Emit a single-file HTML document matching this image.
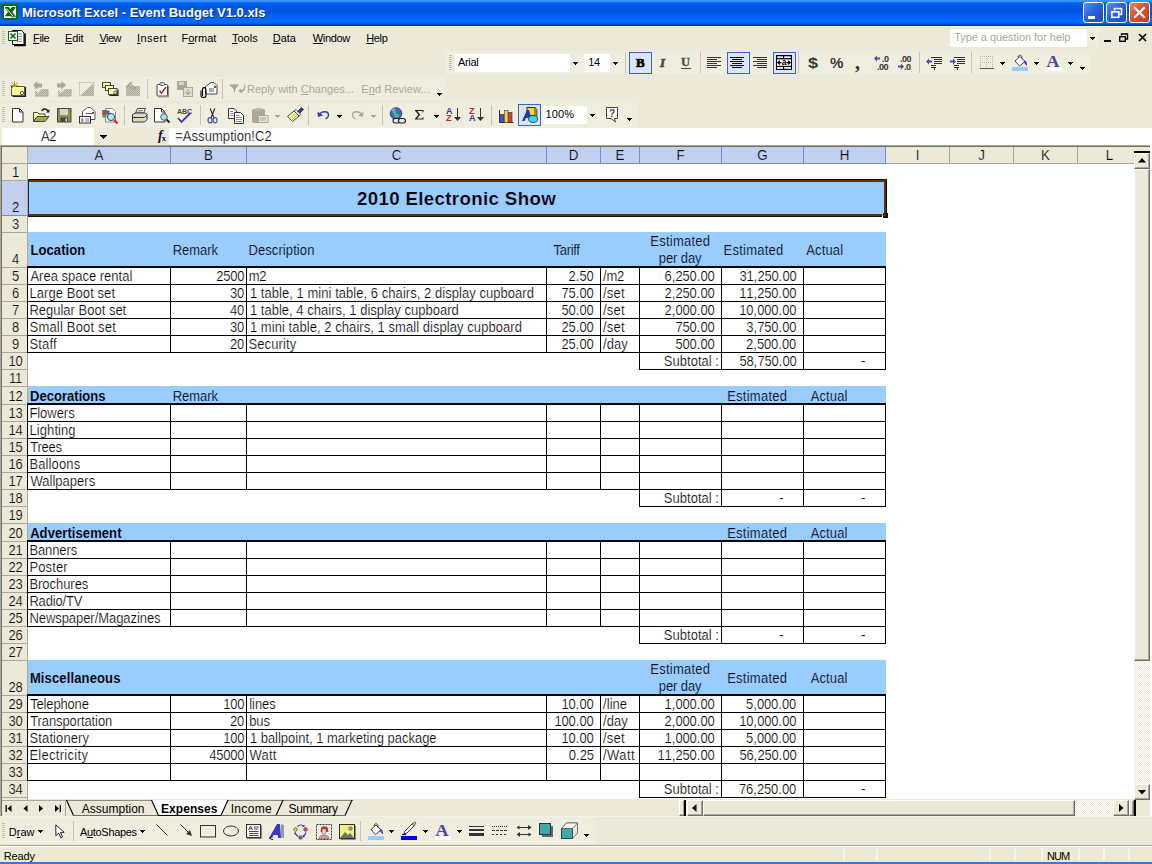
<!DOCTYPE html>
<html><head><meta charset="utf-8"><title>Microsoft Excel - Event Budget V1.0.xls</title>
<style>
html,body{margin:0;padding:0;}
body{width:1152px;height:864px;position:relative;overflow:hidden;background:#ECE9D8;font-family:"Liberation Sans",sans-serif;font-size:11px;color:#000;}
div,span{box-sizing:border-box;}
.a{position:absolute;}
.t{position:absolute;white-space:nowrap;line-height:1;}
.c{position:absolute;white-space:nowrap;font-size:13px;line-height:15px;height:15px;color:#000;-webkit-text-stroke:0.2px #fff;transform:scaleY(1.075);transform-origin:0 12px;}
.c i{display:inline-block;width:7px;text-align:center;font-style:normal;}
.c b{display:inline-block;width:4px;text-align:center;font-weight:normal;}
.rh{position:absolute;left:2.5px;width:26px;text-align:center;letter-spacing:-0.3px;font-size:13px;line-height:15px;height:15px;color:#000;-webkit-text-stroke:0.2px #ECE9D8;transform:scaleY(1.075);transform-origin:0 12px;}
.ch{position:absolute;top:148px;height:16px;text-align:center;font-size:13.33px;line-height:16px;color:#000;-webkit-text-stroke:0.2px #ECE9D8;transform:scaleY(1.075);transform-origin:0 12.5px;}
.hl{position:absolute;height:1px;background:#000;}
.vl{position:absolute;width:1px;background:#000;}
.m{position:absolute;top:32px;font-size:11px;line-height:13px;white-space:nowrap;}
.m u{text-decoration:underline;}
svg{position:absolute;overflow:visible;}
</style></head><body>

<div class="a" style="left:0;top:145px;width:1152px;height:654px;background:#fff;"></div>
<div class="a" style="left:0;top:145px;width:1135px;height:1px;background:#ACA899;"></div>
<div class="a" style="left:0;top:145px;width:1px;height:671px;background:#ACA899;"></div>
<div class="a" style="left:1px;top:146px;width:1133px;height:1px;background:#716F64;"></div>
<div class="a" style="left:1px;top:146px;width:1px;height:670px;background:#716F64;"></div>
<div class="a" style="left:2px;top:147px;width:1132px;height:17px;background:#ECE9D8;"></div>
<div class="a" style="left:28px;top:147px;width:858px;height:16px;background:#C1D0EE;"></div>
<div class="a" style="left:2px;top:163px;width:1132px;height:1px;background:#aca899;"></div>
<div class="a" style="left:28px;top:163px;width:858px;height:1px;background:#6f8fd0;"></div>
<div class="a" style="left:2px;top:164px;width:26px;height:636px;background:#ECE9D8;"></div>
<div class="a" style="left:27px;top:147px;width:1px;height:653px;background:#aca899;"></div>
<div class="a" style="left:2px;top:181px;width:25px;height:34px;background:#C1D0EE;"></div>
<div class="a" style="left:2px;top:215px;width:26px;height:1px;background:#6f8fd0;"></div>
<div class="a" style="left:170px;top:147px;width:1px;height:17px;background:#6f8fd0;"></div>
<div class="ch" style="left:28px;width:142px;-webkit-text-stroke-color:#C1D0EE;">A</div>
<div class="a" style="left:246px;top:147px;width:1px;height:17px;background:#6f8fd0;"></div>
<div class="ch" style="left:171px;width:75px;-webkit-text-stroke-color:#C1D0EE;">B</div>
<div class="a" style="left:546px;top:147px;width:1px;height:17px;background:#6f8fd0;"></div>
<div class="ch" style="left:247px;width:299px;-webkit-text-stroke-color:#C1D0EE;">C</div>
<div class="a" style="left:600px;top:147px;width:1px;height:17px;background:#6f8fd0;"></div>
<div class="ch" style="left:547px;width:53px;-webkit-text-stroke-color:#C1D0EE;">D</div>
<div class="a" style="left:639px;top:147px;width:1px;height:17px;background:#6f8fd0;"></div>
<div class="ch" style="left:601px;width:38px;-webkit-text-stroke-color:#C1D0EE;">E</div>
<div class="a" style="left:721px;top:147px;width:1px;height:17px;background:#6f8fd0;"></div>
<div class="ch" style="left:640px;width:81px;-webkit-text-stroke-color:#C1D0EE;">F</div>
<div class="a" style="left:803px;top:147px;width:1px;height:17px;background:#6f8fd0;"></div>
<div class="ch" style="left:722px;width:81px;-webkit-text-stroke-color:#C1D0EE;">G</div>
<div class="a" style="left:885px;top:147px;width:1px;height:17px;background:#6f8fd0;"></div>
<div class="ch" style="left:804px;width:81px;-webkit-text-stroke-color:#C1D0EE;">H</div>
<div class="a" style="left:949px;top:147px;width:1px;height:17px;background:#aca899;"></div>
<div class="ch" style="left:886px;width:63px;">I</div>
<div class="a" style="left:1013px;top:147px;width:1px;height:17px;background:#aca899;"></div>
<div class="ch" style="left:950px;width:63px;">J</div>
<div class="a" style="left:1077px;top:147px;width:1px;height:17px;background:#aca899;"></div>
<div class="ch" style="left:1014px;width:63px;">K</div>
<div class="ch" style="left:1078px;width:63px;">L</div>
<div class="a" style="left:2px;top:180px;width:25px;height:1px;background:#aca899;"></div>
<div class="rh" style="top:165px;">1</div>
<div class="rh" style="top:200px;-webkit-text-stroke-color:#C1D0EE;">2</div>
<div class="a" style="left:2px;top:232px;width:25px;height:1px;background:#aca899;"></div>
<div class="rh" style="top:217px;">3</div>
<div class="a" style="left:2px;top:267px;width:25px;height:1px;background:#aca899;"></div>
<div class="rh" style="top:252px;">4</div>
<div class="a" style="left:2px;top:284px;width:25px;height:1px;background:#aca899;"></div>
<div class="rh" style="top:269px;">5</div>
<div class="a" style="left:2px;top:301px;width:25px;height:1px;background:#aca899;"></div>
<div class="rh" style="top:286px;">6</div>
<div class="a" style="left:2px;top:318px;width:25px;height:1px;background:#aca899;"></div>
<div class="rh" style="top:303px;">7</div>
<div class="a" style="left:2px;top:335px;width:25px;height:1px;background:#aca899;"></div>
<div class="rh" style="top:320px;">8</div>
<div class="a" style="left:2px;top:352px;width:25px;height:1px;background:#aca899;"></div>
<div class="rh" style="top:337px;">9</div>
<div class="a" style="left:2px;top:369px;width:25px;height:1px;background:#aca899;"></div>
<div class="rh" style="top:354px;">10</div>
<div class="a" style="left:2px;top:386px;width:25px;height:1px;background:#aca899;"></div>
<div class="rh" style="top:371px;">11</div>
<div class="a" style="left:2px;top:404px;width:25px;height:1px;background:#aca899;"></div>
<div class="rh" style="top:389px;">12</div>
<div class="a" style="left:2px;top:421px;width:25px;height:1px;background:#aca899;"></div>
<div class="rh" style="top:406px;">13</div>
<div class="a" style="left:2px;top:438px;width:25px;height:1px;background:#aca899;"></div>
<div class="rh" style="top:423px;">14</div>
<div class="a" style="left:2px;top:455px;width:25px;height:1px;background:#aca899;"></div>
<div class="rh" style="top:440px;">15</div>
<div class="a" style="left:2px;top:472px;width:25px;height:1px;background:#aca899;"></div>
<div class="rh" style="top:457px;">16</div>
<div class="a" style="left:2px;top:489px;width:25px;height:1px;background:#aca899;"></div>
<div class="rh" style="top:474px;">17</div>
<div class="a" style="left:2px;top:506px;width:25px;height:1px;background:#aca899;"></div>
<div class="rh" style="top:491px;">18</div>
<div class="a" style="left:2px;top:523px;width:25px;height:1px;background:#aca899;"></div>
<div class="rh" style="top:508px;">19</div>
<div class="a" style="left:2px;top:541px;width:25px;height:1px;background:#aca899;"></div>
<div class="rh" style="top:526px;">20</div>
<div class="a" style="left:2px;top:558px;width:25px;height:1px;background:#aca899;"></div>
<div class="rh" style="top:543px;">21</div>
<div class="a" style="left:2px;top:575px;width:25px;height:1px;background:#aca899;"></div>
<div class="rh" style="top:560px;">22</div>
<div class="a" style="left:2px;top:592px;width:25px;height:1px;background:#aca899;"></div>
<div class="rh" style="top:577px;">23</div>
<div class="a" style="left:2px;top:609px;width:25px;height:1px;background:#aca899;"></div>
<div class="rh" style="top:594px;">24</div>
<div class="a" style="left:2px;top:626px;width:25px;height:1px;background:#aca899;"></div>
<div class="rh" style="top:611px;">25</div>
<div class="a" style="left:2px;top:643px;width:25px;height:1px;background:#aca899;"></div>
<div class="rh" style="top:628px;">26</div>
<div class="a" style="left:2px;top:660px;width:25px;height:1px;background:#aca899;"></div>
<div class="rh" style="top:645px;">27</div>
<div class="a" style="left:2px;top:695px;width:25px;height:1px;background:#aca899;"></div>
<div class="rh" style="top:680px;">28</div>
<div class="a" style="left:2px;top:712px;width:25px;height:1px;background:#aca899;"></div>
<div class="rh" style="top:697px;">29</div>
<div class="a" style="left:2px;top:729px;width:25px;height:1px;background:#aca899;"></div>
<div class="rh" style="top:714px;">30</div>
<div class="a" style="left:2px;top:746px;width:25px;height:1px;background:#aca899;"></div>
<div class="rh" style="top:731px;">31</div>
<div class="a" style="left:2px;top:763px;width:25px;height:1px;background:#aca899;"></div>
<div class="rh" style="top:748px;">32</div>
<div class="a" style="left:2px;top:780px;width:25px;height:1px;background:#aca899;"></div>
<div class="rh" style="top:765px;">33</div>
<div class="a" style="left:2px;top:797px;width:25px;height:1px;background:#aca899;"></div>
<div class="rh" style="top:782px;">34</div>
<div class="a" style="left:2px;top:814px;width:25px;height:1px;background:#aca899;"></div>
<div class="a" style="left:28px;top:180px;width:858px;height:36px;background:#99CCFF;"></div>
<div class="a" style="left:28px;top:232px;width:858px;height:36px;background:#99CCFF;"></div>
<div class="a" style="left:28px;top:386px;width:858px;height:19px;background:#99CCFF;"></div>
<div class="a" style="left:28px;top:523px;width:858px;height:19px;background:#99CCFF;"></div>
<div class="a" style="left:28px;top:660px;width:858px;height:36px;background:#99CCFF;"></div>
<div class="hl" style="left:27px;top:266px;width:859px;height:2px;background:#000;"></div>
<div class="hl" style="left:27px;top:284px;width:859px;height:1px;background:#000;"></div>
<div class="hl" style="left:27px;top:301px;width:859px;height:1px;background:#000;"></div>
<div class="hl" style="left:27px;top:318px;width:859px;height:1px;background:#000;"></div>
<div class="hl" style="left:27px;top:335px;width:859px;height:1px;background:#000;"></div>
<div class="hl" style="left:27px;top:352px;width:859px;height:1px;background:#000;"></div>
<div class="vl" style="left:27px;top:267px;height:86px;width:1px;background:#000;"></div>
<div class="vl" style="left:170px;top:267px;height:86px;width:1px;background:#000;"></div>
<div class="vl" style="left:246px;top:267px;height:86px;width:1px;background:#000;"></div>
<div class="vl" style="left:546px;top:267px;height:86px;width:1px;background:#000;"></div>
<div class="vl" style="left:600px;top:267px;height:86px;width:1px;background:#000;"></div>
<div class="vl" style="left:639px;top:267px;height:86px;width:1px;background:#000;"></div>
<div class="vl" style="left:721px;top:267px;height:86px;width:1px;background:#000;"></div>
<div class="vl" style="left:803px;top:267px;height:86px;width:1px;background:#000;"></div>
<div class="vl" style="left:885px;top:267px;height:86px;width:1px;background:#000;"></div>
<div class="hl" style="left:639px;top:369px;width:247px;height:1px;background:#000;"></div>
<div class="vl" style="left:639px;top:352px;height:18px;width:1px;background:#000;"></div>
<div class="vl" style="left:721px;top:352px;height:18px;width:1px;background:#000;"></div>
<div class="vl" style="left:803px;top:352px;height:18px;width:1px;background:#000;"></div>
<div class="vl" style="left:885px;top:352px;height:18px;width:1px;background:#000;"></div>
<div class="hl" style="left:27px;top:403px;width:859px;height:2px;background:#000;"></div>
<div class="hl" style="left:27px;top:421px;width:859px;height:1px;background:#000;"></div>
<div class="hl" style="left:27px;top:438px;width:859px;height:1px;background:#000;"></div>
<div class="hl" style="left:27px;top:455px;width:859px;height:1px;background:#000;"></div>
<div class="hl" style="left:27px;top:472px;width:859px;height:1px;background:#000;"></div>
<div class="hl" style="left:27px;top:489px;width:859px;height:1px;background:#000;"></div>
<div class="vl" style="left:27px;top:404px;height:86px;width:1px;background:#000;"></div>
<div class="vl" style="left:170px;top:404px;height:86px;width:1px;background:#000;"></div>
<div class="vl" style="left:246px;top:404px;height:86px;width:1px;background:#000;"></div>
<div class="vl" style="left:546px;top:404px;height:86px;width:1px;background:#000;"></div>
<div class="vl" style="left:600px;top:404px;height:86px;width:1px;background:#000;"></div>
<div class="vl" style="left:639px;top:404px;height:86px;width:1px;background:#000;"></div>
<div class="vl" style="left:721px;top:404px;height:86px;width:1px;background:#000;"></div>
<div class="vl" style="left:803px;top:404px;height:86px;width:1px;background:#000;"></div>
<div class="vl" style="left:885px;top:404px;height:86px;width:1px;background:#000;"></div>
<div class="hl" style="left:639px;top:506px;width:247px;height:1px;background:#000;"></div>
<div class="vl" style="left:639px;top:489px;height:18px;width:1px;background:#000;"></div>
<div class="vl" style="left:721px;top:489px;height:18px;width:1px;background:#000;"></div>
<div class="vl" style="left:803px;top:489px;height:18px;width:1px;background:#000;"></div>
<div class="vl" style="left:885px;top:489px;height:18px;width:1px;background:#000;"></div>
<div class="hl" style="left:27px;top:540px;width:859px;height:2px;background:#000;"></div>
<div class="hl" style="left:27px;top:558px;width:859px;height:1px;background:#000;"></div>
<div class="hl" style="left:27px;top:575px;width:859px;height:1px;background:#000;"></div>
<div class="hl" style="left:27px;top:592px;width:859px;height:1px;background:#000;"></div>
<div class="hl" style="left:27px;top:609px;width:859px;height:1px;background:#000;"></div>
<div class="hl" style="left:27px;top:626px;width:859px;height:1px;background:#000;"></div>
<div class="vl" style="left:27px;top:541px;height:86px;width:1px;background:#000;"></div>
<div class="vl" style="left:170px;top:541px;height:86px;width:1px;background:#000;"></div>
<div class="vl" style="left:246px;top:541px;height:86px;width:1px;background:#000;"></div>
<div class="vl" style="left:546px;top:541px;height:86px;width:1px;background:#000;"></div>
<div class="vl" style="left:600px;top:541px;height:86px;width:1px;background:#000;"></div>
<div class="vl" style="left:639px;top:541px;height:86px;width:1px;background:#000;"></div>
<div class="vl" style="left:721px;top:541px;height:86px;width:1px;background:#000;"></div>
<div class="vl" style="left:803px;top:541px;height:86px;width:1px;background:#000;"></div>
<div class="vl" style="left:885px;top:541px;height:86px;width:1px;background:#000;"></div>
<div class="hl" style="left:639px;top:643px;width:247px;height:1px;background:#000;"></div>
<div class="vl" style="left:639px;top:626px;height:18px;width:1px;background:#000;"></div>
<div class="vl" style="left:721px;top:626px;height:18px;width:1px;background:#000;"></div>
<div class="vl" style="left:803px;top:626px;height:18px;width:1px;background:#000;"></div>
<div class="vl" style="left:885px;top:626px;height:18px;width:1px;background:#000;"></div>
<div class="hl" style="left:27px;top:694px;width:859px;height:2px;background:#000;"></div>
<div class="hl" style="left:27px;top:712px;width:859px;height:1px;background:#000;"></div>
<div class="hl" style="left:27px;top:729px;width:859px;height:1px;background:#000;"></div>
<div class="hl" style="left:27px;top:746px;width:859px;height:1px;background:#000;"></div>
<div class="hl" style="left:27px;top:763px;width:859px;height:1px;background:#000;"></div>
<div class="hl" style="left:27px;top:780px;width:859px;height:1px;background:#000;"></div>
<div class="vl" style="left:27px;top:695px;height:86px;width:1px;background:#000;"></div>
<div class="vl" style="left:170px;top:695px;height:86px;width:1px;background:#000;"></div>
<div class="vl" style="left:246px;top:695px;height:86px;width:1px;background:#000;"></div>
<div class="vl" style="left:546px;top:695px;height:86px;width:1px;background:#000;"></div>
<div class="vl" style="left:600px;top:695px;height:86px;width:1px;background:#000;"></div>
<div class="vl" style="left:639px;top:695px;height:86px;width:1px;background:#000;"></div>
<div class="vl" style="left:721px;top:695px;height:86px;width:1px;background:#000;"></div>
<div class="vl" style="left:803px;top:695px;height:86px;width:1px;background:#000;"></div>
<div class="vl" style="left:885px;top:695px;height:86px;width:1px;background:#000;"></div>
<div class="hl" style="left:639px;top:797px;width:247px;height:1px;background:#000;"></div>
<div class="vl" style="left:639px;top:780px;height:18px;width:1px;background:#000;"></div>
<div class="vl" style="left:721px;top:780px;height:18px;width:1px;background:#000;"></div>
<div class="vl" style="left:803px;top:780px;height:18px;width:1px;background:#000;"></div>
<div class="vl" style="left:885px;top:780px;height:18px;width:1px;background:#000;"></div>
<div class="c" id="title" style="left:28px;width:857px;top:188px;text-align:center;font-weight:bold;font-size:18.67px;line-height:22px;height:22px;-webkit-text-stroke:0.2px #99CCFF;transform:none;letter-spacing:0.364px;margin-left:0px;">2010 Electronic Show</div>
<div class="c" id="A4" style="top:243px;left:30.4px;font-weight:bold;-webkit-text-stroke:0.1px #99CCFF;letter-spacing:0.1px;">Location</div>
<div class="c" id="B4" style="top:243px;left:172.7px;-webkit-text-stroke:0.2px #99CCFF;letter-spacing:-0.026px;">Remark</div>
<div class="c" id="C4" style="top:243px;left:248.47px;-webkit-text-stroke:0.2px #99CCFF;letter-spacing:0.09px;">Description</div>
<div class="c" id="D4" style="top:243px;left:553.54px;-webkit-text-stroke:0.2px #99CCFF;letter-spacing:-0.312px;">Tariff</div>
<div class="c" id="F4a" style="top:234px;left:639.81px;width:81px;text-align:center;-webkit-text-stroke:0.2px #99CCFF;letter-spacing:0.231px;">Estimated</div>
<div class="c" id="F4b" style="top:251px;left:639.69px;width:81px;text-align:center;-webkit-text-stroke:0.2px #99CCFF;letter-spacing:-0.1px;">per day</div>
<div class="c" id="G4" style="top:243px;left:723.47px;-webkit-text-stroke:0.2px #99CCFF;letter-spacing:0.249px;">Estimated</div>
<div class="c" id="H4" style="top:243px;left:806.21px;-webkit-text-stroke:0.2px #99CCFF;letter-spacing:0.152px;">Actual</div>
<div class="c" id="A5" style="top:269px;left:30.44px;letter-spacing:-0.004px;">Area space rental</div>
<div class="c" id="B5" style="top:269px;right:907.75px;text-align:right;"><i>2</i><i>5</i><i>0</i><i>0</i></div>
<div class="c" id="C5" style="top:269px;left:248.69px;letter-spacing:-0.2px;">m2</div>
<div class="c" id="D5" style="top:269px;right:558.51px;text-align:right;"><i>2</i><b>.</b><i>5</i><i>0</i></div>
<div class="c" id="E5" style="top:269px;left:603.08px;letter-spacing:-0.2px;">/m2</div>
<div class="c" id="F5" style="top:269px;right:437.56px;text-align:right;"><i>6</i><b>,</b><i>2</i><i>5</i><i>0</i><b>.</b><i>0</i><i>0</i></div>
<div class="c" id="G5" style="top:269px;right:355.63px;text-align:right;"><i>3</i><i>1</i><b>,</b><i>2</i><i>5</i><i>0</i><b>.</b><i>0</i><i>0</i></div>
<div class="c" id="A6" style="top:286px;left:29.4px;letter-spacing:0.083px;">Large Boot set</div>
<div class="c" id="B6" style="top:286px;right:907.92px;text-align:right;"><i>3</i><i>0</i></div>
<div class="c" id="C6" style="top:286px;left:249.89px;letter-spacing:0.045px;">1 table, 1 mini table, 6 chairs, 2 display cupboard</div>
<div class="c" id="D6" style="top:286px;right:558.48px;text-align:right;"><i>7</i><i>5</i><b>.</b><i>0</i><i>0</i></div>
<div class="c" id="E6" style="top:286px;left:603.08px;letter-spacing:0.18px;">/set</div>
<div class="c" id="F6" style="top:286px;right:437.56px;text-align:right;"><i>2</i><b>,</b><i>2</i><i>5</i><i>0</i><b>.</b><i>0</i><i>0</i></div>
<div class="c" id="G6" style="top:286px;right:355.82px;text-align:right;"><i>1</i><i>1</i><b>,</b><i>2</i><i>5</i><i>0</i><b>.</b><i>0</i><i>0</i></div>
<div class="c" id="A7" style="top:303px;left:29.39px;letter-spacing:0.001px;">Regular Boot set</div>
<div class="c" id="B7" style="top:303px;right:907.92px;text-align:right;"><i>4</i><i>0</i></div>
<div class="c" id="C7" style="top:303px;left:249.89px;letter-spacing:0.022px;">1 table, 4 chairs, 1 display cupboard</div>
<div class="c" id="D7" style="top:303px;right:558.5px;text-align:right;"><i>5</i><i>0</i><b>.</b><i>0</i><i>0</i></div>
<div class="c" id="E7" style="top:303px;left:603.08px;letter-spacing:0.18px;">/set</div>
<div class="c" id="F7" style="top:303px;right:437.4px;text-align:right;"><i>2</i><b>,</b><i>0</i><i>0</i><i>0</i><b>.</b><i>0</i><i>0</i></div>
<div class="c" id="G7" style="top:303px;right:355.86px;text-align:right;"><i>1</i><i>0</i><b>,</b><i>0</i><i>0</i><i>0</i><b>.</b><i>0</i><i>0</i></div>
<div class="c" id="A8" style="top:320px;left:29.58px;letter-spacing:0.184px;">Small Boot set</div>
<div class="c" id="B8" style="top:320px;right:907.92px;text-align:right;"><i>3</i><i>0</i></div>
<div class="c" id="C8" style="top:320px;left:249.89px;letter-spacing:0.053px;">1 mini table, 2 chairs, 1 small display cupboard</div>
<div class="c" id="D8" style="top:320px;right:558.48px;text-align:right;"><i>2</i><i>5</i><b>.</b><i>0</i><i>0</i></div>
<div class="c" id="E8" style="top:320px;left:603.08px;letter-spacing:0.18px;">/set</div>
<div class="c" id="F8" style="top:320px;right:437.64px;text-align:right;"><i>7</i><i>5</i><i>0</i><b>.</b><i>0</i><i>0</i></div>
<div class="c" id="G8" style="top:320px;right:355.65px;text-align:right;"><i>3</i><b>,</b><i>7</i><i>5</i><i>0</i><b>.</b><i>0</i><i>0</i></div>
<div class="c" id="A9" style="top:337px;left:29.56px;letter-spacing:0.11px;">Staff</div>
<div class="c" id="B9" style="top:337px;right:908.1px;text-align:right;"><i>2</i><i>0</i></div>
<div class="c" id="C9" style="top:337px;left:248.43px;letter-spacing:0.135px;">Security</div>
<div class="c" id="D9" style="top:337px;right:558.48px;text-align:right;"><i>2</i><i>5</i><b>.</b><i>0</i><i>0</i></div>
<div class="c" id="E9" style="top:337px;left:603.07px;letter-spacing:0.057px;">/day</div>
<div class="c" id="F9" style="top:337px;right:437.56px;text-align:right;"><i>5</i><i>0</i><i>0</i><b>.</b><i>0</i><i>0</i></div>
<div class="c" id="G9" style="top:337px;right:355.98px;text-align:right;"><i>2</i><b>,</b><i>5</i><i>0</i><i>0</i><b>.</b><i>0</i><i>0</i></div>
<div class="c" id="A29" style="top:697px;left:30.23px;letter-spacing:-0.168px;">Telephone</div>
<div class="c" id="B29" style="top:697px;right:907.85px;text-align:right;"><i>1</i><i>0</i><i>0</i></div>
<div class="c" id="C29" style="top:697px;left:249.33px;letter-spacing:-0.1px;">lines</div>
<div class="c" id="D29" style="top:697px;right:558.48px;text-align:right;"><i>1</i><i>0</i><b>.</b><i>0</i><i>0</i></div>
<div class="c" id="E29" style="top:697px;left:603.07px;letter-spacing:0.043px;">/line</div>
<div class="c" id="F29" style="top:697px;right:437.56px;text-align:right;"><i>1</i><b>,</b><i>0</i><i>0</i><i>0</i><b>.</b><i>0</i><i>0</i></div>
<div class="c" id="G29" style="top:697px;right:355.99px;text-align:right;"><i>5</i><b>,</b><i>0</i><i>0</i><i>0</i><b>.</b><i>0</i><i>0</i></div>
<div class="c" id="A30" style="top:714px;left:30.23px;letter-spacing:-0.1px;">Transportation</div>
<div class="c" id="B30" style="top:714px;right:908.1px;text-align:right;"><i>2</i><i>0</i></div>
<div class="c" id="C30" style="top:714px;left:249.34px;letter-spacing:-0.2px;">bus</div>
<div class="c" id="D30" style="top:714px;right:558.44px;text-align:right;"><i>1</i><i>0</i><i>0</i><b>.</b><i>0</i><i>0</i></div>
<div class="c" id="E30" style="top:714px;left:603.07px;letter-spacing:0.057px;">/day</div>
<div class="c" id="F30" style="top:714px;right:437.4px;text-align:right;"><i>2</i><b>,</b><i>0</i><i>0</i><i>0</i><b>.</b><i>0</i><i>0</i></div>
<div class="c" id="G30" style="top:714px;right:355.86px;text-align:right;"><i>1</i><i>0</i><b>,</b><i>0</i><i>0</i><i>0</i><b>.</b><i>0</i><i>0</i></div>
<div class="c" id="A31" style="top:731px;left:29.58px;letter-spacing:0.102px;">Stationery</div>
<div class="c" id="B31" style="top:731px;right:907.85px;text-align:right;"><i>1</i><i>0</i><i>0</i></div>
<div class="c" id="C31" style="top:731px;left:249.89px;letter-spacing:-0.015px;">1 ballpoint, 1 marketing package</div>
<div class="c" id="D31" style="top:731px;right:558.48px;text-align:right;"><i>1</i><i>0</i><b>.</b><i>0</i><i>0</i></div>
<div class="c" id="E31" style="top:731px;left:603.08px;letter-spacing:0.18px;">/set</div>
<div class="c" id="F31" style="top:731px;right:437.56px;text-align:right;"><i>1</i><b>,</b><i>0</i><i>0</i><i>0</i><b>.</b><i>0</i><i>0</i></div>
<div class="c" id="G31" style="top:731px;right:355.99px;text-align:right;"><i>5</i><b>,</b><i>0</i><i>0</i><i>0</i><b>.</b><i>0</i><i>0</i></div>
<div class="c" id="A32" style="top:748px;left:29.39px;letter-spacing:0.292px;">Electricity</div>
<div class="c" id="B32" style="top:748px;right:907.87px;text-align:right;"><i>4</i><i>5</i><i>0</i><i>0</i><i>0</i></div>
<div class="c" id="C32" style="top:748px;left:249.47px;letter-spacing:0.206px;">Watt</div>
<div class="c" id="D32" style="top:748px;right:558.37px;text-align:right;"><i>0</i><b>.</b><i>2</i><i>5</i></div>
<div class="c" id="E32" style="top:748px;left:603.07px;letter-spacing:0.409px;">/Watt</div>
<div class="c" id="F32" style="top:748px;right:437.56px;text-align:right;"><i>1</i><i>1</i><b>,</b><i>2</i><i>5</i><i>0</i><b>.</b><i>0</i><i>0</i></div>
<div class="c" id="G32" style="top:748px;right:355.61px;text-align:right;"><i>5</i><i>6</i><b>,</b><i>2</i><i>5</i><i>0</i><b>.</b><i>0</i><i>0</i></div>
<div class="c" id="F10" style="top:354px;right:433px;text-align:right;letter-spacing:0.03px;">Subtotal :</div>
<div class="c" id="G10" style="top:354px;right:355.61px;text-align:right;"><i>5</i><i>8</i><b>,</b><i>7</i><i>5</i><i>0</i><b>.</b><i>0</i><i>0</i></div>
<div class="c" id="H10" style="top:354px;right:286.87px;text-align:right;letter-spacing:-0.2px;">-</div>
<div class="c" id="A12" style="top:389px;left:30px;font-weight:bold;-webkit-text-stroke:0.1px #99CCFF;letter-spacing:0.044px;">Decorations</div>
<div class="c" id="B12" style="top:389px;left:172.7px;-webkit-text-stroke:0.2px #99CCFF;letter-spacing:-0.026px;">Remark</div>
<div class="c" id="G12" style="top:389px;left:727.19px;-webkit-text-stroke:0.2px #99CCFF;letter-spacing:0.249px;">Estimated</div>
<div class="c" id="H12" style="top:389px;left:810.69px;-webkit-text-stroke:0.2px #99CCFF;letter-spacing:0.11px;">Actual</div>
<div class="c" id="A13" style="top:406px;left:29.39px;letter-spacing:-0.042px;">Flowers</div>
<div class="c" id="A14" style="top:423px;left:29.58px;letter-spacing:0.06px;">Lighting</div>
<div class="c" id="A15" style="top:440px;left:30.23px;letter-spacing:-0.257px;">Trees</div>
<div class="c" id="A16" style="top:457px;left:29.39px;letter-spacing:0.137px;">Balloons</div>
<div class="c" id="A17" style="top:474px;left:30.45px;letter-spacing:0.019px;">Wallpapers</div>
<div class="c" id="F18" style="top:491px;right:433px;text-align:right;letter-spacing:0.03px;">Subtotal :</div>
<div class="c" id="G18" style="top:491px;right:368.64px;text-align:right;letter-spacing:-0.2px;">-</div>
<div class="c" id="H18" style="top:491px;right:286.87px;text-align:right;letter-spacing:-0.2px;">-</div>
<div class="c" id="A20" style="top:526px;left:30.13px;font-weight:bold;-webkit-text-stroke:0.1px #99CCFF;letter-spacing:0.086px;">Advertisement</div>
<div class="c" id="G20" style="top:526px;left:727.19px;-webkit-text-stroke:0.2px #99CCFF;letter-spacing:0.249px;">Estimated</div>
<div class="c" id="H20" style="top:526px;left:810.69px;-webkit-text-stroke:0.2px #99CCFF;letter-spacing:0.11px;">Actual</div>
<div class="c" id="A21" style="top:543px;left:29.39px;letter-spacing:-0.1px;">Banners</div>
<div class="c" id="A22" style="top:560px;left:29.39px;letter-spacing:0.138px;">Poster</div>
<div class="c" id="A23" style="top:577px;left:29.39px;letter-spacing:-0.033px;">Brochures</div>
<div class="c" id="A24" style="top:594px;left:29.39px;letter-spacing:-0.151px;">Radio/TV</div>
<div class="c" id="A25" style="top:611px;left:29.38px;letter-spacing:-0.055px;">Newspaper/Magazines</div>
<div class="c" id="F26" style="top:628px;right:433px;text-align:right;letter-spacing:0.03px;">Subtotal :</div>
<div class="c" id="G26" style="top:628px;right:368.64px;text-align:right;letter-spacing:-0.2px;">-</div>
<div class="c" id="H26" style="top:628px;right:286.87px;text-align:right;letter-spacing:-0.2px;">-</div>
<div class="c" id="A28" style="top:671px;left:29.91px;font-weight:bold;-webkit-text-stroke:0.1px #99CCFF;letter-spacing:0.134px;">Miscellaneous</div>
<div class="c" id="F28a" style="top:662px;left:639.81px;width:81px;text-align:center;-webkit-text-stroke:0.2px #99CCFF;letter-spacing:0.231px;">Estimated</div>
<div class="c" id="F28b" style="top:679px;left:639.69px;width:81px;text-align:center;-webkit-text-stroke:0.2px #99CCFF;letter-spacing:-0.1px;">per day</div>
<div class="c" id="G28" style="top:671px;left:727.19px;-webkit-text-stroke:0.2px #99CCFF;letter-spacing:0.249px;">Estimated</div>
<div class="c" id="H28" style="top:671px;left:810.69px;-webkit-text-stroke:0.2px #99CCFF;letter-spacing:0.11px;">Actual</div>
<div class="c" id="F34" style="top:782px;right:433px;text-align:right;letter-spacing:0.03px;">Subtotal :</div>
<div class="c" id="G34" style="top:782px;right:355.99px;text-align:right;"><i>7</i><i>6</i><b>,</b><i>2</i><i>5</i><i>0</i><b>.</b><i>0</i><i>0</i></div>
<div class="c" id="H34" style="top:782px;right:286.87px;text-align:right;letter-spacing:-0.2px;">-</div>
<div class="a" style="left:28px;top:179px;width:859px;height:3px;background:#5E3208;"></div>
<div class="a" style="left:28px;top:179px;width:859px;height:1px;background:#160B00;"></div>
<div class="a" style="left:28px;top:214px;width:854px;height:3px;background:#5E3208;"></div>
<div class="a" style="left:28px;top:216px;width:854px;height:1px;background:#160B00;"></div>
<div class="a" style="left:28px;top:179px;width:1px;height:38px;background:#232C5A;"></div>
<div class="a" style="left:884px;top:179px;width:3px;height:34px;background:#5E3208;"></div>
<div class="a" style="left:886px;top:179px;width:1px;height:34px;background:#160B00;"></div>
<div class="a" style="left:883px;top:213px;width:5px;height:5px;background:#1A0E02;"></div>
<div class="a" style="left:884px;top:214px;width:2px;height:2px;background:#5E3208;"></div>
<div class="a" style="left:0;top:0;width:1152px;height:26px;background:linear-gradient(to bottom,#3B97FF 0px,#3B97FF 1px,#3590FC 1px,#3590FC 2px,#0A6CF6 2px,#0A6CF6 3px,#0265F1 3px,#0265F1 4px,#005FE8 4px,#005FE8 5px,#005AE0 5px,#005AE0 6px,#0058DE 6px,#0058DE 7px,#0057DE 7px,#0057DE 8px,#0056DF 8px,#0056DF 9px,#0055E1 9px,#0055E1 10px,#0055E4 10px,#0055E4 11px,#0055E7 11px,#0055E7 12px,#0056EA 12px,#0056EA 13px,#0058EE 13px,#0058EE 14px,#005BF2 14px,#005BF2 15px,#005EF6 15px,#005EF6 16px,#0161F9 16px,#0161F9 17px,#0264FC 17px,#0264FC 18px,#0367FE 18px,#0367FE 19px,#0469FF 19px,#0469FF 20px,#046AFF 20px,#046AFF 21px,#0469FE 21px,#0469FE 22px,#0566F8 22px,#0566F8 23px,#055DE8 23px,#055DE8 24px,#0349C8 24px,#0349C8 25px,#0136A8 25px,#0136A8 26px);"></div>
<svg style="left:2px;top:4px;" width="16" height="16" viewBox="0 0 16 16" ><rect x="0" y="0" width="16" height="16" fill="#0B6A10"/><rect x="2" y="2" width="12" height="12" fill="#fff"/><path d="M3 3h4l1.500 2 1.500-2h3.500v1l-3 4 3 4v0.500h-10.500v-0.500l3-4-3-4z" fill="#0B6A10"/><path d="M4.500 4.500l6.500 7.500" stroke="#fff" stroke-width="0.900"/><rect x="2" y="12.500" width="12" height="1.500" fill="#fff"/><rect x="9" y="12.300" width="5" height="0.900" fill="#0B6A10"/></svg>
<div class="t" style="left:22px;top:6px;font-size:13px;font-weight:bold;color:#fff;text-shadow:1px 1px 0 #0A2E9A;" id="ttl">Microsoft Excel - Event Budget V1.0.xls</div>
<div class="a" style="left:1083px;top:2px;width:21px;height:21px;border:1px solid #fff;border-radius:3px;background:linear-gradient(135deg,#5C8FF2 0%,#2F62DA 45%,#1C48C0 100%);"></div>
<div class="a" style="left:1106px;top:2px;width:21px;height:21px;border:1px solid #fff;border-radius:3px;background:linear-gradient(135deg,#5C8FF2 0%,#2F62DA 45%,#1C48C0 100%);"></div>
<div class="a" style="left:1129px;top:2px;width:21px;height:21px;border:1px solid #fff;border-radius:3px;background:linear-gradient(135deg,#E9866A 0%,#D8512C 45%,#C23A12 100%);"></div>
<div class="a" style="left:1088px;top:16px;width:7px;height:3px;background:#fff;"></div>
<svg style="left:1106px;top:2px;" width="21" height="21" viewBox="0 0 21 21" ><path d="M8.5 8.5v-2h7v6h-2" fill="none" stroke="#fff" stroke-width="1.6"/><rect x="5.8" y="9.8" width="7" height="5.5" fill="none" stroke="#fff" stroke-width="1.6"/></svg>
<svg style="left:1129px;top:2px;" width="21" height="21" viewBox="0 0 21 21" ><path d="M6 6l9 9M15 6l-9 9" stroke="#fff" stroke-width="2.2" stroke-linecap="square"/></svg>
<div class="a" style="left:0px;top:26px;width:1152px;height:102px;background:#ECE9D8;"></div>
<div class="a" style="left:0px;top:26px;width:1152px;height:1px;background:#F1F4FA;"></div>
<div class="a" style="left:2px;top:31px;width:3px;height:1px;background:#C1BEB0;"></div>
<div class="a" style="left:2px;top:33px;width:3px;height:1px;background:#C1BEB0;"></div>
<div class="a" style="left:2px;top:35px;width:3px;height:1px;background:#C1BEB0;"></div>
<div class="a" style="left:2px;top:37px;width:3px;height:1px;background:#C1BEB0;"></div>
<div class="a" style="left:2px;top:39px;width:3px;height:1px;background:#C1BEB0;"></div>
<div class="a" style="left:2px;top:41px;width:3px;height:1px;background:#C1BEB0;"></div>
<div class="a" style="left:2px;top:43px;width:3px;height:1px;background:#C1BEB0;"></div>
<svg style="left:8px;top:29px;" width="17" height="17" viewBox="0 0 17 17" ><path d="M4.5 1.5h9l2.5 2.5v11.500h-11.500z" fill="#fff" stroke="#000" stroke-width="1"/><path d="M6 16.5h11v-12" fill="none" stroke="#000" stroke-width="1.6"/><path d="M9 5h5M9 7.500h5M9 10h5M9 12.500h5" stroke="#9c9c9c" stroke-width="1"/><rect x="0.500" y="2.500" width="9" height="9" fill="#fff" stroke="#0B6A10" stroke-width="1"/><path d="M2.500 4.500l5 5M7.500 4.500l-5 5" stroke="#0B6A10" stroke-width="1.700"/></svg>
<div class="m" id="m0" style="letter-spacing:-0.347px;margin-left:0px;left:33px;"><u>F</u>ile</div>
<div class="m" id="m1" style="letter-spacing:-0.142px;margin-left:-1.04px;left:66px;"><u>E</u>dit</div>
<div class="m" id="m2" style="letter-spacing:-0.607px;margin-left:0.56px;left:99px;"><u>V</u>iew</div>
<div class="m" id="m3" style="letter-spacing:0.405px;margin-left:0.01px;left:137px;"><u>I</u>nsert</div>
<div class="m" id="m4" style="letter-spacing:0px;margin-left:-0.5px;left:182px;">F<u>o</u>rmat</div>
<div class="m" id="m5" style="letter-spacing:-0.012px;margin-left:0px;left:232px;"><u>T</u>ools</div>
<div class="m" id="m6" style="letter-spacing:-0.096px;margin-left:-0.21px;left:273px;"><u>D</u>ata</div>
<div class="m" id="m7" style="letter-spacing:-0.343px;margin-left:0.79px;left:312px;"><u>W</u>indow</div>
<div class="m" id="m8" style="letter-spacing:-0.369px;margin-left:0.25px;left:366px;"><u>H</u>elp</div>
<div class="a" style="left:950px;top:29px;width:137px;height:18px;background:#fff;"></div>
<div class="t" id="hlp" style="letter-spacing:-0.046px;margin-left:0.14px;left:954px;top:32px;font-size:11px;color:#ACA899;">Type a question for help</div>
<div class="a" style="left:1087px;top:29px;width:12px;height:18px;background:#EFEDDE;"></div>
<div class="a" style="left:1090px;top:37px;width:5px;height:1px;background:#000;"></div>
<div class="a" style="left:1091px;top:38px;width:3px;height:1px;background:#000;"></div>
<div class="a" style="left:1092px;top:39px;width:1px;height:1px;background:#000;"></div>
<div class="a" style="left:1104px;top:40px;width:7px;height:2px;background:#000;"></div>
<svg style="left:1119px;top:33px;" width="10" height="10" viewBox="0 0 10 10" ><path d="M2.500 2.500v-1.500h6v5h-1.500" fill="none" stroke="#000" stroke-width="1.400"/><rect x="0.700" y="3.700" width="5.600" height="4.600" fill="none" stroke="#000" stroke-width="1.400"/></svg>
<svg style="left:1138px;top:33px;" width="9" height="9" viewBox="0 0 9 9" ><path d="M1 1l7 7M8 1l-7 7" stroke="#000" stroke-width="1.700"/></svg>
<div class="a" style="left:446px;top:51px;width:643px;height:23px;background:#EFEDDE;border-radius:2px;"></div>
<div class="a" style="left:449px;top:55px;width:3px;height:1px;background:#C1BEB0;"></div>
<div class="a" style="left:449px;top:57px;width:3px;height:1px;background:#C1BEB0;"></div>
<div class="a" style="left:449px;top:59px;width:3px;height:1px;background:#C1BEB0;"></div>
<div class="a" style="left:449px;top:61px;width:3px;height:1px;background:#C1BEB0;"></div>
<div class="a" style="left:449px;top:63px;width:3px;height:1px;background:#C1BEB0;"></div>
<div class="a" style="left:449px;top:65px;width:3px;height:1px;background:#C1BEB0;"></div>
<div class="a" style="left:449px;top:67px;width:3px;height:1px;background:#C1BEB0;"></div>
<div class="a" style="left:449px;top:69px;width:3px;height:1px;background:#C1BEB0;"></div>
<div class="a" style="left:455px;top:54px;width:115px;height:18px;background:#fff;"></div>
<div class="a" style="left:570px;top:54px;width:12px;height:18px;background:#EFEDDE;"></div>
<div class="t" id="fnt" style="letter-spacing:-0.333px;margin-left:-0.05px;left:458px;top:57px;font-size:11px;">Arial</div>
<div class="a" style="left:573px;top:62px;width:5px;height:1px;background:#000;"></div>
<div class="a" style="left:574px;top:63px;width:3px;height:1px;background:#000;"></div>
<div class="a" style="left:575px;top:64px;width:1px;height:1px;background:#000;"></div>
<div class="a" style="left:584px;top:54px;width:26px;height:18px;background:#fff;"></div>
<div class="a" style="left:610px;top:54px;width:12px;height:18px;background:#EFEDDE;"></div>
<div class="t" id="fsz" style="letter-spacing:-0.2px;margin-left:0.19px;left:588px;top:57px;font-size:11px;">14</div>
<div class="a" style="left:613px;top:62px;width:5px;height:1px;background:#000;"></div>
<div class="a" style="left:614px;top:63px;width:3px;height:1px;background:#000;"></div>
<div class="a" style="left:615px;top:64px;width:1px;height:1px;background:#000;"></div>
<div class="a" style="left:625px;top:52px;width:1px;height:21px;background:#C5C2B8;"></div>
<div class="a" style="left:629px;top:52px;width:23px;height:22px;background:#DCE5F5;border:1px solid #3A66B8;"></div>
<div class="t" style="left:636px;top:56px;font-family:'Liberation Serif',serif;font-weight:bold;font-size:13px;-webkit-text-stroke:0.7px #000;">B</div>
<div class="t" style="left:660px;top:56px;font-family:'Liberation Serif',serif;font-weight:bold;font-style:italic;font-size:13px;color:#4a4a4a;-webkit-text-stroke:0.6px #4a4a4a;">I</div>
<div class="t" style="left:681px;top:56px;font-family:'Liberation Serif',serif;font-weight:bold;font-size:12.5px;color:#4a4a4a;-webkit-text-stroke:0.3px #4a4a4a;">U</div>
<div class="a" style="left:681px;top:68px;width:10px;height:1px;background:#4a4a4a;"></div>
<div class="a" style="left:700px;top:52px;width:1px;height:21px;background:#C5C2B8;"></div>
<div class="a" style="left:707px;top:57px;width:14px;height:1px;background:#333;"></div>
<div class="a" style="left:707px;top:59px;width:10px;height:1px;background:#333;"></div>
<div class="a" style="left:707px;top:61px;width:14px;height:1px;background:#333;"></div>
<div class="a" style="left:707px;top:63px;width:10px;height:1px;background:#333;"></div>
<div class="a" style="left:707px;top:65px;width:14px;height:1px;background:#333;"></div>
<div class="a" style="left:707px;top:67px;width:10px;height:1px;background:#333;"></div>
<div class="a" style="left:727px;top:52px;width:23px;height:22px;background:#DCE5F5;border:1px solid #3A66B8;"></div>
<div class="a" style="left:730px;top:57px;width:14px;height:1px;background:#000;"></div>
<div class="a" style="left:732px;top:59px;width:10px;height:1px;background:#000;"></div>
<div class="a" style="left:730px;top:61px;width:14px;height:1px;background:#000;"></div>
<div class="a" style="left:732px;top:63px;width:10px;height:1px;background:#000;"></div>
<div class="a" style="left:730px;top:65px;width:14px;height:1px;background:#000;"></div>
<div class="a" style="left:732px;top:67px;width:10px;height:1px;background:#000;"></div>
<div class="a" style="left:753px;top:57px;width:14px;height:1px;background:#333;"></div>
<div class="a" style="left:757px;top:59px;width:10px;height:1px;background:#333;"></div>
<div class="a" style="left:753px;top:61px;width:14px;height:1px;background:#333;"></div>
<div class="a" style="left:757px;top:63px;width:10px;height:1px;background:#333;"></div>
<div class="a" style="left:753px;top:65px;width:14px;height:1px;background:#333;"></div>
<div class="a" style="left:757px;top:67px;width:10px;height:1px;background:#333;"></div>
<div class="a" style="left:773px;top:52px;width:23px;height:22px;background:#DCE5F5;border:1px solid #3A66B8;"></div>
<svg style="left:776px;top:55px;" width="16" height="15" viewBox="0 0 16 15" ><rect x="0" y="0" width="16" height="15" fill="#000"/><rect x="1.200" y="1.300" width="5.800" height="1.800" fill="#fff"/><rect x="8.200" y="1.300" width="6.600" height="1.800" fill="#fff"/><rect x="1" y="4.400" width="14" height="6.400" fill="#fff"/><rect x="1.200" y="12" width="5.800" height="1.800" fill="#fff"/><rect x="8.200" y="12" width="6.600" height="1.800" fill="#fff"/><path d="M0.800 7.600l3-2.600v1.900h1.700v1.400h-1.700v1.900zM15.200 7.600l-3-2.600v1.900h-1.700v1.400h1.700v1.900z" fill="#000"/><text x="8" y="10.300" font-size="8.500" font-weight="bold" text-anchor="middle" font-family="Liberation Sans" fill="#000">a</text></svg>
<div class="a" style="left:798px;top:52px;width:1px;height:21px;background:#C5C2B8;"></div>
<div class="t" style="left:808px;top:55px;font-weight:bold;font-size:15px;color:#3a3a3a;transform:scaleX(1.2);transform-origin:0 0;">$</div>
<div class="t" style="left:830px;top:56px;font-weight:bold;font-size:14px;color:#3a3a3a;transform:scaleX(1.08);transform-origin:0 0;">%</div>
<div class="t" style="left:855px;top:52px;font-family:'Liberation Serif',serif;font-weight:bold;font-size:20px;color:#333;">,</div>
<div class="t" style="left:882px;top:55px;font-size:9px;font-weight:bold;color:#333;letter-spacing:-0.5px;">.0</div>
<div class="t" style="left:877px;top:63px;font-size:9px;font-weight:bold;color:#333;letter-spacing:-0.5px;">.00</div>
<svg style="left:874px;top:55px;" width="7" height="7" viewBox="0 0 7 7" ><path d="M0 3.500l3-3v2h3v2h-3v2z" fill="#4A4A9C"/></svg>
<div class="t" style="left:900px;top:55px;font-size:9px;font-weight:bold;color:#333;letter-spacing:-0.5px;">.00</div>
<div class="t" style="left:904px;top:63px;font-size:9px;font-weight:bold;color:#333;letter-spacing:-0.5px;">.0</div>
<svg style="left:897px;top:63px;" width="7" height="7" viewBox="0 0 7 7" ><path d="M7 3.500l-3-3v2h-3v2h3v2z" fill="#4A4A9C"/></svg>
<div class="a" style="left:919px;top:52px;width:1px;height:21px;background:#C5C2B8;"></div>
<div class="a" style="left:931px;top:57px;width:11px;height:1px;background:#333;"></div>
<div class="a" style="left:934px;top:59px;width:8px;height:1px;background:#333;"></div>
<div class="a" style="left:934px;top:61px;width:8px;height:1px;background:#333;"></div>
<div class="a" style="left:934px;top:63px;width:8px;height:1px;background:#333;"></div>
<div class="a" style="left:931px;top:65px;width:5px;height:1px;background:#333;"></div>
<div class="a" style="left:931px;top:67px;width:5px;height:1px;background:#333;"></div>
<div class="a" style="left:934px;top:67px;width:1px;height:3px;background:#333;"></div>
<svg style="left:926px;top:58px;" width="7" height="7" viewBox="0 0 7 7" ><path d="M0 3.500l3-3v2h3v2h-3v2z" fill="#4A4A9C"/></svg>
<div class="a" style="left:954px;top:57px;width:11px;height:1px;background:#333;"></div>
<div class="a" style="left:957px;top:59px;width:8px;height:1px;background:#333;"></div>
<div class="a" style="left:957px;top:61px;width:8px;height:1px;background:#333;"></div>
<div class="a" style="left:957px;top:63px;width:8px;height:1px;background:#333;"></div>
<div class="a" style="left:954px;top:65px;width:5px;height:1px;background:#333;"></div>
<div class="a" style="left:954px;top:67px;width:5px;height:1px;background:#333;"></div>
<div class="a" style="left:957px;top:67px;width:1px;height:3px;background:#333;"></div>
<svg style="left:949px;top:58px;" width="7" height="7" viewBox="0 0 7 7" ><path d="M7 3.500l-3-3v2h-3v2h3v2z" fill="#4A4A9C"/></svg>
<div class="a" style="left:971px;top:52px;width:1px;height:21px;background:#C5C2B8;"></div>
<svg style="left:980px;top:56px;" width="14" height="14" viewBox="0 0 14 14" shape-rendering="crispEdges"><path d="M0.500 0v13M6.500 0v13M12.500 0v13M0 0.500h13M0 6.500h13" stroke="#B5B2A5" stroke-dasharray="1 1" stroke-width="1"/><path d="M0 12.500h14" stroke="#555" stroke-width="1.500"/></svg>
<div class="a" style="left:1000px;top:62px;width:5px;height:1px;background:#000;"></div>
<div class="a" style="left:1001px;top:63px;width:3px;height:1px;background:#000;"></div>
<div class="a" style="left:1002px;top:64px;width:1px;height:1px;background:#000;"></div>
<svg style="left:1012px;top:54px;" width="16" height="18" viewBox="0 0 16 18" ><rect x="0" y="13" width="16" height="4" fill="#99CCFF"/><path d="M3 7l5-4.500 5 5-5.500 4.500z" fill="#fff" stroke="#444" stroke-width="1"/><path d="M6 3.500c0-3 4-3 4 0v2" fill="none" stroke="#444" stroke-width="1"/><path d="M12.500 6c2 1 3 3 2.500 6-1.500-1-2.500-3-3.500-4z" fill="#4A4AB0"/></svg>
<div class="a" style="left:1034px;top:62px;width:5px;height:1px;background:#000;"></div>
<div class="a" style="left:1035px;top:63px;width:3px;height:1px;background:#000;"></div>
<div class="a" style="left:1036px;top:64px;width:1px;height:1px;background:#000;"></div>
<div class="t" style="left:1047px;top:54px;font-family:'Liberation Serif',serif;font-weight:bold;font-size:16px;color:#4A4A9C;transform:scaleX(1.15);transform-origin:50% 0;">A</div>
<div class="a" style="left:1046px;top:67px;width:16px;height:4px;background:#fff;"></div>
<div class="a" style="left:1068px;top:62px;width:5px;height:1px;background:#000;"></div>
<div class="a" style="left:1069px;top:63px;width:3px;height:1px;background:#000;"></div>
<div class="a" style="left:1070px;top:64px;width:1px;height:1px;background:#000;"></div>
<div class="a" style="left:1080px;top:67px;width:5px;height:1px;background:#000;"></div>
<div class="a" style="left:1081px;top:68px;width:3px;height:1px;background:#000;"></div>
<div class="a" style="left:1082px;top:69px;width:1px;height:1px;background:#000;"></div>
<div class="a" style="left:0px;top:77px;width:445px;height:24px;background:#EFEDDE;border-radius:2px;"></div>
<div class="a" style="left:2px;top:81px;width:3px;height:1px;background:#C1BEB0;"></div>
<div class="a" style="left:2px;top:83px;width:3px;height:1px;background:#C1BEB0;"></div>
<div class="a" style="left:2px;top:85px;width:3px;height:1px;background:#C1BEB0;"></div>
<div class="a" style="left:2px;top:87px;width:3px;height:1px;background:#C1BEB0;"></div>
<div class="a" style="left:2px;top:89px;width:3px;height:1px;background:#C1BEB0;"></div>
<div class="a" style="left:2px;top:91px;width:3px;height:1px;background:#C1BEB0;"></div>
<div class="a" style="left:2px;top:93px;width:3px;height:1px;background:#C1BEB0;"></div>
<div class="a" style="left:2px;top:95px;width:3px;height:1px;background:#C1BEB0;"></div>
<svg style="left:10px;top:81px;" width="16" height="16" viewBox="0 0 16 16" ><rect x="1.500" y="5.500" width="13" height="9" fill="#FFFF99" stroke="#555"/><path d="M2.500 15.500h13v-9.500" stroke="#222" fill="none" stroke-width="1.200"/><circle cx="12" cy="12" r="1.700" fill="#e8e8e8" stroke="#444" stroke-width="0.900"/><path d="M4.500 0.500v8M0.500 4.500h8M1.500 1.500l6 6M7.500 1.500l-6 6" stroke="#B8B800" stroke-width="0.900"/><rect x="3" y="6" width="5" height="4" fill="#FFFF99"/><path d="M4.500 0.500v5M0.500 4.500h3.500M1.500 1.500l2.500 2.500M7.500 1.500l-2.500 2.500" stroke="#A0A000" stroke-width="0.900"/></svg>
<svg style="left:33px;top:81px;" width="16" height="16" viewBox="0 0 16 16" ><pattern id="hl33" width="2" height="2" patternUnits="userSpaceOnUse"><rect width="1" height="1" fill="#ACA899"/><rect x="1" y="1" width="1" height="1" fill="#ACA899"/></pattern><path d="M2 9l3 3 4-4h6v7h-13z" fill="url(#hl33)"/><path d="M2 9l3 3 4-4h6v7h-13z" fill="#ACA899" opacity="0.500"/><path d="M2 8v-2M15 8v7h-13" stroke="#ACA899" fill="none"/><path d="M0 4l4.500-4v2.500h4.500v4h-4.500v2z" fill="#ACA899"/></svg>
<svg style="left:56px;top:81px;" width="16" height="16" viewBox="0 0 16 16" ><pattern id="hr56" width="2" height="2" patternUnits="userSpaceOnUse"><rect width="1" height="1" fill="#ACA899"/><rect x="1" y="1" width="1" height="1" fill="#ACA899"/></pattern><path d="M2 9l3 3 4-4h6v7h-13z" fill="url(#hr56)"/><path d="M2 9l3 3 4-4h6v7h-13z" fill="#ACA899" opacity="0.500"/><path d="M15 8v7h-13" stroke="#ACA899" fill="none"/><path d="M10 4l-4.500-4v2.500h-4.500v4h4.500v2z" fill="#ACA899"/></svg>
<svg style="left:79px;top:81px;" width="16" height="16" viewBox="0 0 16 16" ><pattern id="htri79" width="2" height="2" patternUnits="userSpaceOnUse"><rect width="1" height="1" fill="#ACA899"/><rect x="1" y="1" width="1" height="1" fill="#ACA899"/></pattern><path d="M0.500 1.500h15" stroke="#ACA899" stroke-dasharray="1 1"/><path d="M0.500 1.500v13" stroke="#ACA899" stroke-dasharray="1 1"/><path d="M1 15l14-13v13z" fill="url(#htri79)"/><path d="M1 15l14-13v13z" fill="#ACA899" opacity="0.550"/></svg>
<svg style="left:102px;top:82px;" width="17" height="15" viewBox="0 0 17 15" ><rect x="0.500" y="0.500" width="8" height="5" fill="#FFFF99" stroke="#444"/><rect x="3.500" y="3.500" width="8" height="5" fill="#FFFF99" stroke="#444"/><rect x="6.500" y="6.500" width="8.500" height="6" fill="#FFFF99" stroke="#444"/><path d="M7.500 13.500h8.500v-6" fill="none" stroke="#222" stroke-width="1.200"/><circle cx="13" cy="10.500" r="1.500" fill="#e8e8e8" stroke="#444" stroke-width="0.800"/></svg>
<svg style="left:125px;top:81px;" width="16" height="16" viewBox="0 0 16 16" ><pattern id="hx125" width="2" height="2" patternUnits="userSpaceOnUse"><rect width="1" height="1" fill="#ACA899"/><rect x="1" y="1" width="1" height="1" fill="#ACA899"/></pattern><rect x="1" y="5" width="14" height="10" fill="url(#hx125)"/><rect x="1" y="5" width="14" height="10" fill="#ACA899" opacity="0.500"/><path d="M1 6l6-5M4 2l7 6M3 4l6 5" stroke="#ACA899" stroke-width="1.600"/></svg>
<div class="a" style="left:147px;top:79px;width:1px;height:20px;background:#C5C2B8;"></div>
<svg style="left:156px;top:82px;" width="13" height="15" viewBox="0 0 13 15" ><rect x="1" y="2.500" width="10.500" height="11.500" rx="1" fill="#fff" stroke="#444"/><path d="M2 14.800h10.500v-11" stroke="#888" fill="none"/><rect x="4" y="0.500" width="4.500" height="3" rx="1" fill="#D0D0E0" stroke="#555" stroke-width="0.800"/><path d="M3.500 8.500l2 2.800 4.500-6.300" fill="none" stroke="#B02020" stroke-width="1.400"/></svg>
<svg style="left:177px;top:81px;" width="16" height="16" viewBox="0 0 16 16" ><rect x="0" y="0" width="10" height="9" fill="#ACA899"/><rect x="2" y="1" width="5" height="3" fill="#D8D5C8"/><rect x="6.500" y="6.500" width="9" height="9" fill="#E2DFD2" stroke="#ACA899"/><path d="M11 8v5M8.500 11l2.500 2.500 2.500-2.500" stroke="#ACA899" fill="none" stroke-width="1.200"/></svg>
<svg style="left:200px;top:81px;" width="18" height="17" viewBox="0 0 18 17" ><path d="M5.500 5.500l5.500-4h3l3 3v8.500h-11.500z" fill="#fff" stroke="#444"/><path d="M9 8h5M9 10h5" stroke="#4A4AB0" stroke-width="1"/><rect x="14" y="5" width="2" height="2" fill="#C03030"/><path d="M2.500 15v-6.500c0-2.500 3.500-2.500 3.500 0v6c0 2.600-5 2.600-5 0v-5" fill="none" stroke="#000" stroke-width="1.100"/></svg>
<div class="a" style="left:222px;top:79px;width:1px;height:20px;background:#C5C2B8;"></div>
<svg style="left:229px;top:84px;" width="17" height="10" viewBox="0 0 17 10" ><path d="M0 0.500h3l2 -0.500 2 0.500h3l-3.500 4.500-1 4.500-1-4.500z" fill="#ACA899"/><path d="M15 0.500c1 3.500-1 5-3 5.500l0-1.500-3 2.500 4 2.500v-1.600c3-1 4-4 3-7.400z" fill="#ACA899"/></svg>
<div class="t" id="rwc" style="letter-spacing:0px;margin-left:0px;left:247px;top:84px;font-size:11px;color:#ACA899;">Reply with <u>C</u>hanges...</div>
<div class="t" id="erv" style="letter-spacing:0.117px;margin-left:0.17px;left:361px;top:84px;font-size:11px;color:#ACA899;">E<u>n</u>d Review...</div>
<div class="a" style="left:437px;top:93px;width:5px;height:1px;background:#000;"></div>
<div class="a" style="left:438px;top:94px;width:3px;height:1px;background:#000;"></div>
<div class="a" style="left:439px;top:95px;width:1px;height:1px;background:#000;"></div>
<div class="a" style="left:0px;top:103px;width:637px;height:25px;background:#EFEDDE;border-radius:2px 2px 0 0;"></div>
<div class="a" style="left:2px;top:107px;width:3px;height:1px;background:#C1BEB0;"></div>
<div class="a" style="left:2px;top:109px;width:3px;height:1px;background:#C1BEB0;"></div>
<div class="a" style="left:2px;top:111px;width:3px;height:1px;background:#C1BEB0;"></div>
<div class="a" style="left:2px;top:113px;width:3px;height:1px;background:#C1BEB0;"></div>
<div class="a" style="left:2px;top:115px;width:3px;height:1px;background:#C1BEB0;"></div>
<div class="a" style="left:2px;top:117px;width:3px;height:1px;background:#C1BEB0;"></div>
<div class="a" style="left:2px;top:119px;width:3px;height:1px;background:#C1BEB0;"></div>
<div class="a" style="left:2px;top:121px;width:3px;height:1px;background:#C1BEB0;"></div>
<svg style="left:12px;top:108px;" width="12" height="15" viewBox="0 0 12 15" ><path d="M0.500 0.500h7l3.500 3.500v10h-10.500z" fill="#fff" stroke="#333"/><path d="M7.500 0.500v3.500h3.500" fill="none" stroke="#333"/></svg>
<svg style="left:33px;top:108px;" width="17" height="15" viewBox="0 0 17 15" ><path d="M0.500 13.500v-9h4l1.500 1.500h6v3" fill="#FFFF99" stroke="#444"/><path d="M0.500 13.500l3.500-5h12l-4 5z" fill="#A8A840" stroke="#444"/><path d="M8.500 3c2-3 5.500-2.500 6.500 0.500" fill="none" stroke="#222" stroke-width="1.300"/><path d="M16.500 1v3.500h-3.500z" fill="#222"/></svg>
<svg style="left:57px;top:108px;" width="15" height="15" viewBox="0 0 15 15" ><rect x="0.500" y="0.500" width="13.500" height="13.500" fill="#909040" stroke="#444"/><rect x="3" y="1" width="8" height="6" fill="#D4D4D8"/><rect x="3.500" y="9.500" width="7.500" height="4.500" fill="#444"/><rect x="8.500" y="10.500" width="1.500" height="3" fill="#ddd"/></svg>
<svg style="left:79px;top:107px;" width="17" height="17" viewBox="0 0 17 17" ><path d="M3.500 4.500l5-4h3l4.500 4v8h-12.500z" fill="#fff" stroke="#555"/><path d="M7 6.500h6" stroke="#4A4AB0"/><rect x="13" y="5" width="2" height="2" fill="#C03030"/><rect x="0.500" y="9.500" width="11" height="6.500" fill="#fff" stroke="#333"/><path d="M2 12h2.500M2 14h2.500" stroke="#444"/><path d="M6 12h4M6 14h4" stroke="#7A7AC0"/></svg>
<svg style="left:102px;top:108px;" width="17" height="16" viewBox="0 0 17 16" ><path d="M3.500 0.500h7l3 3v10.500h-10z" fill="#fff" stroke="#888"/><rect x="0.500" y="2.500" width="4" height="4" fill="#C04040" stroke="#555" stroke-width="0.600"/><rect x="4.500" y="2.500" width="3" height="4" fill="#4060C0"/><rect x="0.500" y="6.500" width="4" height="3" fill="#40A040"/><rect x="4.500" y="6.500" width="3" height="3" fill="#E0C040"/><circle cx="9" cy="9" r="3.600" fill="#A8E8F0" stroke="#446" stroke-width="1"/><path d="M12 12l3.500 3.500" stroke="#D02020" stroke-width="2"/></svg>
<div class="a" style="left:124px;top:105px;width:1px;height:20px;background:#C5C2B8;"></div>
<svg style="left:131px;top:108px;" width="17" height="15" viewBox="0 0 17 15" ><path d="M4.500 5l2-4.500h8l-2 4.500z" fill="#fff" stroke="#444"/><path d="M7 2.500h5M6.300 4h5" stroke="#777" stroke-width="0.800"/><path d="M1.500 6.500l3-1.500h10l1.500 1.500v5l-2.500 2.500h-12z" fill="#D8D8D0" stroke="#333"/><path d="M1.500 9.500h12l2.500-2.500" fill="none" stroke="#333"/><rect x="3" y="10.500" width="9" height="1.500" fill="#E8E060"/></svg>
<svg style="left:154px;top:108px;" width="17" height="16" viewBox="0 0 17 16" ><path d="M0.500 0.500h7l3.500 3.500v10h-10.500z" fill="#fff" stroke="#333"/><path d="M7.500 0.500v3.500h3.500" fill="none" stroke="#333"/><circle cx="10" cy="9" r="3.300" fill="#A8E8E0" stroke="#556" stroke-width="1"/><path d="M12.500 11.500l3 3" stroke="#222" stroke-width="2"/></svg>
<div class="t" style="left:177px;top:108px;font-size:7px;font-weight:bold;color:#444;letter-spacing:-0.1px;">ABC</div>
<svg style="left:177px;top:113px;" width="16" height="11" viewBox="0 0 16 11" ><path d="M1 5l3.500 4 9-9" fill="none" stroke="#3838A8" stroke-width="1.800"/></svg>
<div class="a" style="left:200px;top:105px;width:1px;height:20px;background:#C5C2B8;"></div>
<svg style="left:207px;top:108px;" width="11" height="16" viewBox="0 0 11 16" ><path d="M3.200 0.500l3.800 9.500M7.800 0.500l-3.800 9.500" stroke="#333" stroke-width="1.200" fill="none"/><ellipse cx="3" cy="12.300" rx="2" ry="2.600" fill="none" stroke="#4A4AB0" stroke-width="1.200"/><ellipse cx="8" cy="12.300" rx="2" ry="2.600" fill="none" stroke="#4A4AB0" stroke-width="1.200"/></svg>
<svg style="left:228px;top:108px;" width="17" height="16" viewBox="0 0 17 16" ><path d="M0.500 0.500h5.500l2.500 2.500v7.500h-8z" fill="#fff" stroke="#333"/><path d="M2 3.500h3M2 5.500h5M2 7.500h5" stroke="#7070C0" stroke-width="0.800"/><path d="M6.500 4.500h6l3 3v8h-9z" fill="#fff" stroke="#333"/><path d="M8 7.500h3.500M8 9.500h6M8 11.500h6M8 13.500h6" stroke="#7070C0" stroke-width="0.800"/></svg>
<svg style="left:252px;top:108px;" width="17" height="16" viewBox="0 0 17 16" ><rect x="0.500" y="1.500" width="12" height="13" rx="1" fill="#ACA899" stroke="#ACA899"/><rect x="3.500" y="0" width="6" height="3" fill="#BDB9A8"/><rect x="6.500" y="7.500" width="9.500" height="7" fill="#E8E5D8" stroke="#ACA899"/><path d="M8 10h6M8 12h6" stroke="#ACA899"/></svg>
<div class="a" style="left:275px;top:115px;width:5px;height:1px;background:#ACA899;"></div>
<div class="a" style="left:276px;top:116px;width:3px;height:1px;background:#ACA899;"></div>
<div class="a" style="left:277px;top:117px;width:1px;height:1px;background:#ACA899;"></div>
<svg style="left:287px;top:107px;" width="17" height="16" viewBox="0 0 17 16" ><path d="M0.500 9.500l6.500-5.500 5 5-6.500 5.500z" fill="#FFFFA0" stroke="#444"/><path d="M2.500 11l5.500-4.500M4.500 13l5.500-4.500" stroke="#AAA860" stroke-width="0.700"/><path d="M7 4l2-1.500 5 5-2 1.500z" fill="#ddd" stroke="#444" stroke-width="0.800"/><path d="M11 4l3.500-3.500 2 2-3.500 3.500z" fill="#3A3AA0" stroke="#223" stroke-width="0.800"/></svg>
<div class="a" style="left:308px;top:105px;width:1px;height:20px;background:#C5C2B8;"></div>
<svg style="left:317px;top:110px;" width="13" height="10" viewBox="0 0 13 10" ><path d="M2.500 4.500c2.500-4 9-3.500 9 0.500 0 2-1 3-3 3.800" fill="none" stroke="#3838A8" stroke-width="1.300"/><path d="M0.500 1.500l0.500 5.500 5-1.500z" fill="#3838A8"/></svg>
<div class="a" style="left:337px;top:115px;width:5px;height:1px;background:#000;"></div>
<div class="a" style="left:338px;top:116px;width:3px;height:1px;background:#000;"></div>
<div class="a" style="left:339px;top:117px;width:1px;height:1px;background:#000;"></div>
<svg style="left:351px;top:110px;" width="13" height="10" viewBox="0 0 13 10" ><path d="M10.500 4.500c-2.500-4-9-3.500-9 0.500 0 2 1 3 3 3.800" fill="none" stroke="#ACA899" stroke-width="1.300"/><path d="M12.500 1.500l-0.500 5.500-5-1.500z" fill="#ACA899"/></svg>
<div class="a" style="left:371px;top:115px;width:5px;height:1px;background:#ACA899;"></div>
<div class="a" style="left:372px;top:116px;width:3px;height:1px;background:#ACA899;"></div>
<div class="a" style="left:373px;top:117px;width:1px;height:1px;background:#ACA899;"></div>
<div class="a" style="left:382px;top:105px;width:1px;height:20px;background:#C5C2B8;"></div>
<svg style="left:389px;top:107px;" width="17" height="18" viewBox="0 0 17 18" ><circle cx="7" cy="6.500" r="5.800" fill="#3A6AD8" stroke="#224" stroke-width="0.800"/><path d="M3 3.500c2-2 4 0 4 2s3 1 3 3-2 2.500-4 1.500z" fill="#50C050"/><path d="M2.500 4c1-1.500 2.500-2 4-2" stroke="#C8E0FF" stroke-width="0.800" fill="none"/><rect x="4" y="11.500" width="7" height="4.500" rx="2.200" fill="#E8E8E8" stroke="#222" stroke-width="1.100"/><rect x="9.500" y="11.500" width="7" height="4.500" rx="2.200" fill="#E8E8E8" stroke="#222" stroke-width="1.100"/></svg>
<svg style="left:415px;top:110px;" width="9" height="10" viewBox="0 0 9 10" ><path d="M0 0h8.500v2.200h-1v-1.200h-5.300l3 3.700-3.200 3.800h5.500v-1.200h1v2.200h-8.500v-0.800l3.400-4-3.400-4z" fill="#222"/></svg>
<div class="a" style="left:434px;top:115px;width:5px;height:1px;background:#000;"></div>
<div class="a" style="left:435px;top:116px;width:3px;height:1px;background:#000;"></div>
<div class="a" style="left:436px;top:117px;width:1px;height:1px;background:#000;"></div>
<div class="t" style="left:446px;top:107px;font-size:9px;font-weight:bold;color:#3838A8;">A</div>
<div class="t" style="left:446px;top:114px;font-size:9px;font-weight:bold;color:#B03030;">Z</div>
<div class="a" style="left:457px;top:108px;width:1px;height:12px;background:#333;"></div>
<svg style="left:454px;top:117px;" width="7" height="4" viewBox="0 0 7 4" ><path d="M0 0h7l-3.500 4z" fill="#333"/></svg>
<div class="t" style="left:469px;top:107px;font-size:9px;font-weight:bold;color:#B03030;">Z</div>
<div class="t" style="left:469px;top:114px;font-size:9px;font-weight:bold;color:#3838A8;">A</div>
<div class="a" style="left:480px;top:108px;width:1px;height:12px;background:#333;"></div>
<svg style="left:477px;top:117px;" width="7" height="4" viewBox="0 0 7 4" ><path d="M0 0h7l-3.500 4z" fill="#333"/></svg>
<div class="a" style="left:491px;top:105px;width:1px;height:20px;background:#C5C2B8;"></div>
<svg style="left:498px;top:108px;" width="16" height="16" viewBox="0 0 16 16" ><path d="M1.500 2v12.500h14" fill="none" stroke="#333"/><rect x="2.500" y="6.500" width="3.500" height="8" fill="#4A4AD0" stroke="#224" stroke-width="0.600"/><rect x="6.500" y="2.500" width="3.500" height="12" fill="#E8D840" stroke="#442" stroke-width="0.600"/><rect x="10.500" y="4.500" width="3.500" height="10" fill="#D04040" stroke="#422" stroke-width="0.600"/></svg>
<div class="a" style="left:518px;top:104px;width:23px;height:22px;background:#DCE5F5;border:1px solid #3A66B8;"></div>
<svg style="left:521px;top:107px;" width="18" height="17" viewBox="0 0 18 17" ><rect x="6" y="0.500" width="8" height="8" fill="#E8D840" stroke="#333"/><path d="M14 0.500l2 2v8l-2-2" fill="#A89820" stroke="#333" stroke-width="0.700"/><path d="M1 14l5-11 2 0 3 11h-2.500l-0.500-3h-3l-1.500 3z" fill="#2838A8"/><ellipse cx="12" cy="12" rx="4.500" ry="3.500" fill="#40D8D8" stroke="#234" stroke-width="0.800"/></svg>
<div class="a" style="left:543px;top:106px;width:44px;height:18px;background:#fff;"></div>
<div class="a" style="left:587px;top:106px;width:12px;height:18px;background:#EFEDDE;"></div>
<div class="t" id="zm" style="letter-spacing:0.117px;margin-left:-1.4px;left:547px;top:109px;font-size:11px;">100%</div>
<div class="a" style="left:590px;top:114px;width:5px;height:1px;background:#000;"></div>
<div class="a" style="left:591px;top:115px;width:3px;height:1px;background:#000;"></div>
<div class="a" style="left:592px;top:116px;width:1px;height:1px;background:#000;"></div>
<svg style="left:605px;top:107px;" width="15" height="17" viewBox="0 0 15 17" ><path d="M1.500 0.500h11v11h-3l1 3.500-4.500-3.500h-4.500z" fill="#FFFFE0" stroke="#444"/><text x="7" y="10" font-size="10" font-weight="bold" text-anchor="middle" fill="#3838A8" font-family="Liberation Sans">?</text></svg>
<div class="a" style="left:627px;top:118px;width:5px;height:1px;background:#000;"></div>
<div class="a" style="left:628px;top:119px;width:3px;height:1px;background:#000;"></div>
<div class="a" style="left:629px;top:120px;width:1px;height:1px;background:#000;"></div>
<div class="a" style="left:0px;top:128px;width:1152px;height:17px;background:#fff;"></div>
<div class="a" style="left:0px;top:128px;width:2px;height:17px;background:#ECE9D8;"></div>
<div class="a" style="left:94px;top:128px;width:75px;height:17px;background:#ECE9D8;"></div>
<div class="t" id="nb" style="letter-spacing:-0.2px;margin-left:-0.13px;left:41px;top:130px;font-size:13px;-webkit-text-stroke:0.2px #fff;transform:scaleY(1.075);transform-origin:0 10px;">A2</div>
<div class="a" style="left:100px;top:135px;width:7px;height:1px;background:#000;"></div>
<div class="a" style="left:101px;top:136px;width:5px;height:1px;background:#000;"></div>
<div class="a" style="left:102px;top:137px;width:3px;height:1px;background:#000;"></div>
<div class="a" style="left:103px;top:138px;width:1px;height:1px;background:#000;"></div>
<div class="t" style="left:158px;top:129px;font-family:'Liberation Serif',serif;font-style:italic;font-weight:bold;font-size:14px;color:#111;">f<span style="font-size:8.5px;font-style:normal;position:relative;top:1px;left:-1px;">x</span></div>
<div class="t" id="fx" style="letter-spacing:0.065px;margin-left:0.15px;left:175px;top:130px;font-size:13px;-webkit-text-stroke:0.2px #fff;transform:scaleY(1.075);transform-origin:0 10px;">=Assumption!C2</div>
<div class="a" style="left:1134px;top:145px;width:16px;height:655px;background:#F6F5EE;background-image:conic-gradient(#fff 25%,#ECE9D8 0 50%,#fff 0 75%,#ECE9D8 0);background-size:2px 2px;"></div>
<div class="a" style="left:1134px;top:145px;width:16px;height:6px;background:#ECE9D8;"></div>
<div class="a" style="left:1134px;top:151px;width:16px;height:2px;background:#000;"></div>
<div class="a" style="left:1134px;top:145px;width:16px;height:1px;background:#ACA899;"></div>
<div class="a" style="left:1134px;top:146px;width:16px;height:1px;background:#716F64;"></div>
<div class="a" style="left:1134px;top:153px;width:16px;height:16px;background:#ECE9D8;border-top:1px solid #fff;border-left:1px solid #fff;border-right:1px solid #716F64;border-bottom:1px solid #716F64;box-shadow:inset -1px -1px 0 #ACA899;"></div>
<svg style="left:1138px;top:158px;" width="8" height="5" viewBox="0 0 8 5" ><path d="M0 4.500h8l-4-4.500z" fill="#000"/></svg>
<div class="a" style="left:1134px;top:169px;width:16px;height:492px;background:#ECE9D8;border-top:1px solid #fff;border-left:1px solid #fff;border-right:1px solid #716F64;border-bottom:1px solid #716F64;box-shadow:inset -1px -1px 0 #ACA899;"></div>
<div class="a" style="left:1134px;top:784px;width:16px;height:16px;background:#ECE9D8;border-top:1px solid #fff;border-left:1px solid #fff;border-right:1px solid #716F64;border-bottom:1px solid #716F64;box-shadow:inset -1px -1px 0 #ACA899;"></div>
<svg style="left:1138px;top:790px;" width="8" height="5" viewBox="0 0 8 5" ><path d="M0 0h8l-4 4.500z" fill="#000"/></svg>
<div class="a" style="left:0px;top:800px;width:1152px;height:16px;background:#ECE9D8;"></div>
<div class="a" style="left:0px;top:799px;width:1px;height:17px;background:#ACA899;"></div>
<div class="a" style="left:1px;top:799px;width:1px;height:17px;background:#716F64;"></div>
<div class="a" style="left:2px;top:800px;width:64px;height:1px;background:#ACA899;"></div>
<svg style="left:4px;top:804px;" width="60" height="9" viewBox="0 0 60 9" ><rect x="1.500" y="1" width="1.300" height="7" fill="#000"/><path d="M7.500 1v7l-4-3.500z" fill="#000"/><path d="M23.500 1v7l-4-3.500z" fill="#000"/><path d="M35 1v7l4-3.500z" fill="#000"/><path d="M51 1v7l4-3.500z" fill="#000"/><rect x="55.700" y="1" width="1.300" height="7" fill="#000"/></svg>
<div class="a" style="left:65px;top:801px;width:1px;height:15px;background:#ACA899;"></div>
<svg style="left:66px;top:800px;" width="300" height="16" viewBox="0 0 300 16" ><path d="M0 0.500h287" stroke="#8C8A7C" stroke-width="1"/><path d="M85.500 0l7 15.500h62l7-15.500z" fill="#fff"/><path d="M7.500 15.500h84.500" fill="none" stroke="#716F64" stroke-width="1"/><path d="M156 15.500h54M211 15.500h68" fill="none" stroke="#716F64" stroke-width="1"/><path d="M0.500 0l7 15.500" fill="none" stroke="#000" stroke-width="1.100"/><path d="M85.500 0l7 15.500h62.500l7-15.500" fill="none" stroke="#000" stroke-width="1.100"/><path d="M210 15.500l7-15.500" fill="none" stroke="#000" stroke-width="1.100"/><path d="M279 15.500l7-15.500" fill="none" stroke="#000" stroke-width="1.100"/></svg>
<div class="t" id="tb0" style="letter-spacing:0px;margin-left:-0.18px;top:803px;left:82px;font-size:12px;">Assumption</div>
<div class="t" id="tb1" style="letter-spacing:0.049px;margin-left:0px;top:803px;left:161px;font-size:12px;font-weight:bold;">Expenses</div>
<div class="t" id="tb2" style="letter-spacing:0.328px;margin-left:-0.31px;top:803px;left:231px;font-size:12px;">Income</div>
<div class="t" id="tb3" style="letter-spacing:-0.304px;margin-left:-1.54px;top:803px;left:290px;font-size:12px;">Summary</div>
<div class="a" style="left:686px;top:800px;width:448px;height:16px;background:#F6F5EE;background-image:conic-gradient(#fff 25%,#ECE9D8 0 50%,#fff 0 75%,#ECE9D8 0);background-size:2px 2px;"></div>
<div class="a" style="left:679px;top:800px;width:6px;height:16px;background:#ECE9D8;border-top:1px solid #fff;border-left:1px solid #fff;border-right:1px solid #716F64;border-bottom:1px solid #716F64;box-shadow:inset -1px -1px 0 #ACA899;"></div>
<div class="a" style="left:684px;top:800px;width:2px;height:16px;background:#000;"></div>
<div class="a" style="left:687px;top:800px;width:16px;height:16px;background:#ECE9D8;border-top:1px solid #fff;border-left:1px solid #fff;border-right:1px solid #716F64;border-bottom:1px solid #716F64;box-shadow:inset -1px -1px 0 #ACA899;"></div>
<svg style="left:692px;top:804px;" width="5" height="8" viewBox="0 0 5 8" ><path d="M4.500 0v8l-4.500-4z" fill="#000"/></svg>
<div class="a" style="left:703px;top:800px;width:372px;height:16px;background:#ECE9D8;border-top:1px solid #fff;border-left:1px solid #fff;border-right:1px solid #716F64;border-bottom:1px solid #716F64;box-shadow:inset -1px -1px 0 #ACA899;"></div>
<div class="a" style="left:1113px;top:800px;width:16px;height:16px;background:#ECE9D8;border-top:1px solid #fff;border-left:1px solid #fff;border-right:1px solid #716F64;border-bottom:1px solid #716F64;box-shadow:inset -1px -1px 0 #ACA899;"></div>
<svg style="left:1119px;top:804px;" width="5" height="8" viewBox="0 0 5 8" ><path d="M0 0v8l4.500-4z" fill="#000"/></svg>
<div class="a" style="left:1129px;top:800px;width:5px;height:16px;background:#ECE9D8;border-top:1px solid #fff;border-left:1px solid #fff;border-right:1px solid #716F64;border-bottom:1px solid #716F64;box-shadow:inset -1px -1px 0 #ACA899;"></div>
<div class="a" style="left:1134px;top:800px;width:2px;height:16px;background:#000;"></div>
<div class="a" style="left:1136px;top:800px;width:14px;height:16px;background:#ECE9D8;"></div>
<div class="a" style="left:1150px;top:145px;width:2px;height:671px;background:#fff;"></div>
<div class="a" style="left:0px;top:816px;width:1152px;height:30px;background:#ECE9D8;"></div>
<div class="a" style="left:0px;top:816px;width:1152px;height:1px;background:#F4F2E8;"></div>
<div class="a" style="left:0px;top:817px;width:596px;height:27px;background:#EFEDDE;border-radius:2px;"></div>
<div class="a" style="left:2px;top:823px;width:3px;height:1px;background:#C1BEB0;"></div>
<div class="a" style="left:2px;top:825px;width:3px;height:1px;background:#C1BEB0;"></div>
<div class="a" style="left:2px;top:827px;width:3px;height:1px;background:#C1BEB0;"></div>
<div class="a" style="left:2px;top:829px;width:3px;height:1px;background:#C1BEB0;"></div>
<div class="a" style="left:2px;top:831px;width:3px;height:1px;background:#C1BEB0;"></div>
<div class="a" style="left:2px;top:833px;width:3px;height:1px;background:#C1BEB0;"></div>
<div class="a" style="left:2px;top:835px;width:3px;height:1px;background:#C1BEB0;"></div>
<div class="a" style="left:2px;top:837px;width:3px;height:1px;background:#C1BEB0;"></div>
<div class="t" id="drw" style="letter-spacing:0px;margin-left:-0.23px;left:9px;top:827px;font-size:11px;">D<u>r</u>aw</div>
<div class="a" style="left:38px;top:830px;width:5px;height:1px;background:#000;"></div>
<div class="a" style="left:39px;top:831px;width:3px;height:1px;background:#000;"></div>
<div class="a" style="left:40px;top:832px;width:1px;height:1px;background:#000;"></div>
<svg style="left:55px;top:824px;" width="10" height="15" viewBox="0 0 12 18" ><path d="M1 1v13l3.500-3 2.500 5.500 2-1-2.500-5.500h4.500z" fill="#fff" stroke="#222" stroke-width="1.200"/></svg>
<div class="a" style="left:73px;top:821px;width:1px;height:20px;background:#C5C2B8;"></div>
<div class="t" id="ash" style="letter-spacing:-0.321px;margin-left:0px;left:80px;top:827px;font-size:11px;">A<u>u</u>toShapes</div>
<div class="a" style="left:140px;top:830px;width:5px;height:1px;background:#000;"></div>
<div class="a" style="left:141px;top:831px;width:3px;height:1px;background:#000;"></div>
<div class="a" style="left:142px;top:832px;width:1px;height:1px;background:#000;"></div>
<svg style="left:156px;top:824px;" width="14" height="14" viewBox="0 0 14 14" ><path d="M0.500 0.500l11 11" stroke="#333" stroke-width="1"/></svg>
<svg style="left:180px;top:824px;" width="14" height="14" viewBox="0 0 14 14" ><path d="M0.500 0.500l9 9" stroke="#333" stroke-width="1"/><path d="M12 12l-6-2 4-4z" fill="#333"/></svg>
<svg style="left:200px;top:825px;" width="16" height="13" viewBox="0 0 16 13" ><rect x="0.500" y="0.500" width="15" height="11.500" fill="none" stroke="#333"/></svg>
<svg style="left:223px;top:825px;" width="16" height="12" viewBox="0 0 16 12" ><ellipse cx="8" cy="6" rx="7.500" ry="5" fill="none" stroke="#333"/></svg>
<svg style="left:246px;top:824px;" width="16" height="15" viewBox="0 0 16 15" ><rect x="0.500" y="0.500" width="14" height="13" fill="#fff" stroke="#333"/><path d="M1 14.500h14.500v-13" fill="none" stroke="#888"/><path d="M2.500 6l2-4 2 4M3.300 4.800h2.400" fill="none" stroke="#333" stroke-width="0.900"/><path d="M8 3h4.500M8 5h4.500M3 7.500h9.500M3 9.500h9.500M3 11.500h9.500" stroke="#333" stroke-width="0.900"/></svg>
<svg style="left:269px;top:823px;" width="18" height="17" viewBox="0 0 18 17" ><path d="M0 15l8-14h3l1 14h-3l-0.300-3h-4l-1.700 3z" fill="#3838C8"/><path d="M12 1l3 1v13l-3-0.500" fill="#9898A8"/><path d="M0 15l3 1.500h1" stroke="#223" fill="none"/></svg>
<svg style="left:292px;top:823px;" width="17" height="17" viewBox="0 0 17 17" ><circle cx="3.500" cy="6.500" r="1.800" fill="#E8E040" stroke="#444" stroke-width="0.700"/><circle cx="13.500" cy="6.500" r="1.800" fill="#D04848" stroke="#444" stroke-width="0.700"/><circle cx="8.500" cy="14.500" r="1.800" fill="#806090" stroke="#444" stroke-width="0.700"/><path d="M5.500 3.500c2-2 4.500-2 6 -0.500M14 9.500c-0.500 2-1.500 3-3 4M6 13.500c-1.500-1-2.500-2-3-4" fill="none" stroke="#3838A8" stroke-width="1.100"/><path d="M12.500 1.500v2.500h-2.500zM10.500 12l0.500 2.500 2-1zM2.500 9l0 2.500 2-1z" fill="#3838A8"/></svg>
<svg style="left:316px;top:824px;" width="17" height="17" viewBox="0 0 17 17" ><rect x="0.500" y="0.500" width="15" height="15" fill="#F4F0F0" stroke="#333" stroke-dasharray="2 1"/><path d="M5 4c1-2.500 6-2.500 7 0l0.500 4h-8z" fill="#C04030"/><path d="M6 5h4v4l-2 1.500-2-1.500z" fill="#F0D0B8" stroke="#555" stroke-width="0.500"/><path d="M3 15c0-3 2-4 5-4s5 1 5 4z" fill="#C8A0A0" stroke="#555" stroke-width="0.500"/></svg>
<svg style="left:339px;top:824px;" width="17" height="16" viewBox="0 0 17 16" ><rect x="0.500" y="0.500" width="15" height="14" fill="#F0F080" stroke="#333"/><path d="M1 14l5-6 3 3 2-2 4 5z" fill="#707070"/><circle cx="11.500" cy="4.500" r="1.800" fill="#A0A060" stroke="#555" stroke-width="0.600"/><path d="M1.500 15.500h15v-14" fill="none" stroke="#888"/></svg>
<div class="a" style="left:360px;top:821px;width:1px;height:20px;background:#C5C2B8;"></div>
<svg style="left:368px;top:822px;" width="17" height="19" viewBox="0 0 17 19" ><rect x="0" y="14" width="16" height="4" fill="#99CCFF"/><path d="M3 7.500l5-4.500 5 5-5.500 4.500z" fill="#fff" stroke="#444" stroke-width="1"/><path d="M6 4c0-3 4-3 4 0v2" fill="none" stroke="#444" stroke-width="1"/><path d="M12.500 6.500c2 1 3 3 2.500 6-1.500-1-2.500-3-3.500-4z" fill="#4A4AB0"/></svg>
<div class="a" style="left:389px;top:830px;width:5px;height:1px;background:#000;"></div>
<div class="a" style="left:390px;top:831px;width:3px;height:1px;background:#000;"></div>
<div class="a" style="left:391px;top:832px;width:1px;height:1px;background:#000;"></div>
<svg style="left:401px;top:822px;" width="18" height="19" viewBox="0 0 18 19" ><rect x="0" y="14" width="16" height="4" fill="#0000E0"/><path d="M3 12l1-3 8-8 2 2-8 8z" fill="#fff" stroke="#223" stroke-width="0.900"/><path d="M11 2l3-2 1 1-2 3z" fill="#D8D040" stroke="#333" stroke-width="0.600"/><path d="M1 12.500h4" stroke="#223" stroke-width="1.400"/></svg>
<div class="a" style="left:423px;top:830px;width:5px;height:1px;background:#000;"></div>
<div class="a" style="left:424px;top:831px;width:3px;height:1px;background:#000;"></div>
<div class="a" style="left:425px;top:832px;width:1px;height:1px;background:#000;"></div>
<div class="t" style="left:436px;top:823px;font-family:'Liberation Serif',serif;font-weight:bold;font-size:16px;color:#4A4A9C;transform:scaleX(1.15);transform-origin:50% 0;">A</div>
<div class="a" style="left:435px;top:836px;width:16px;height:4px;background:#fff;"></div>
<div class="a" style="left:457px;top:830px;width:5px;height:1px;background:#000;"></div>
<div class="a" style="left:458px;top:831px;width:3px;height:1px;background:#000;"></div>
<div class="a" style="left:459px;top:832px;width:1px;height:1px;background:#000;"></div>
<div class="a" style="left:469px;top:826px;width:15px;height:1px;background:#333;"></div>
<div class="a" style="left:469px;top:829px;width:15px;height:2px;background:#333;"></div>
<div class="a" style="left:469px;top:833px;width:15px;height:3px;background:#333;"></div>
<svg style="left:492px;top:825px;" width="16" height="12" viewBox="0 0 16 12" shape-rendering="crispEdges"><path d="M0 1.500h16" stroke="#333" stroke-dasharray="1 1"/><path d="M0 5.500h16" stroke="#333" stroke-dasharray="3 1"/><path d="M0 9.500h16" stroke="#333" stroke-dasharray="2 2"/></svg>
<svg style="left:516px;top:824px;" width="16" height="15" viewBox="0 0 16 15" ><path d="M2 3.500h13M1 10.500h13" stroke="#333" stroke-width="1.200"/><path d="M15.500 3.500l-3.500-2.500v5zM0.500 10.500l3.500-2.500v5zM0.500 3.500l3-2v4zM15.500 10.500l-3-2v4z" fill="#333"/></svg>
<svg style="left:539px;top:823px;" width="16" height="16" viewBox="0 0 16 16" ><rect x="3" y="3" width="11" height="11" fill="#333" opacity="0.700"/><rect x="0.500" y="0.500" width="11" height="11" fill="#40A8A8" stroke="#234"/></svg>
<svg style="left:561px;top:822px;" width="18" height="18" viewBox="0 0 18 18" ><path d="M0.500 6.500l5-5.500h11v10l-5 5.500h-11z" fill="#E8E8E8" stroke="#555" stroke-width="0.800"/><rect x="0.500" y="6.500" width="11" height="10" fill="#40A8A8" stroke="#234" stroke-width="0.800"/><path d="M0.500 6.500l5-5.500h11l-5 5.500z" fill="#fff" stroke="#555" stroke-width="0.800"/></svg>
<div class="a" style="left:584px;top:834px;width:5px;height:1px;background:#000;"></div>
<div class="a" style="left:585px;top:835px;width:3px;height:1px;background:#000;"></div>
<div class="a" style="left:586px;top:836px;width:1px;height:1px;background:#000;"></div>
<div class="a" style="left:0px;top:845px;width:1152px;height:1px;background:#ACA899;"></div>
<div class="a" style="left:0px;top:846px;width:1152px;height:1px;background:#fff;"></div>
<div class="a" style="left:0px;top:847px;width:1152px;height:15px;background:#ECE9D8;"></div>
<div class="t" id="rdy" style="letter-spacing:-0.118px;margin-left:-1.22px;left:5px;top:851px;font-size:11px;">Ready</div>
<div class="t" id="num" style="letter-spacing:-0.9px;margin-left:0px;left:1047px;top:851px;font-size:11px;">NUM</div>
<div class="a" style="left:843px;top:848px;width:2px;height:13px;background:#F6F4EC;"></div>
<div class="a" style="left:876px;top:848px;width:2px;height:13px;background:#F6F4EC;"></div>
<div class="a" style="left:989px;top:848px;width:2px;height:13px;background:#F6F4EC;"></div>
<div class="a" style="left:1014px;top:848px;width:2px;height:13px;background:#F6F4EC;"></div>
<div class="a" style="left:1041px;top:848px;width:2px;height:13px;background:#F6F4EC;"></div>
<div class="a" style="left:1078px;top:848px;width:2px;height:13px;background:#F6F4EC;"></div>
<div class="a" style="left:1103px;top:848px;width:2px;height:13px;background:#F6F4EC;"></div>
<div class="a" style="left:1128px;top:848px;width:2px;height:13px;background:#F6F4EC;"></div>
<div class="a" style="left:0px;top:862px;width:1152px;height:2px;background:#3A78D8;"></div>
</body></html>
